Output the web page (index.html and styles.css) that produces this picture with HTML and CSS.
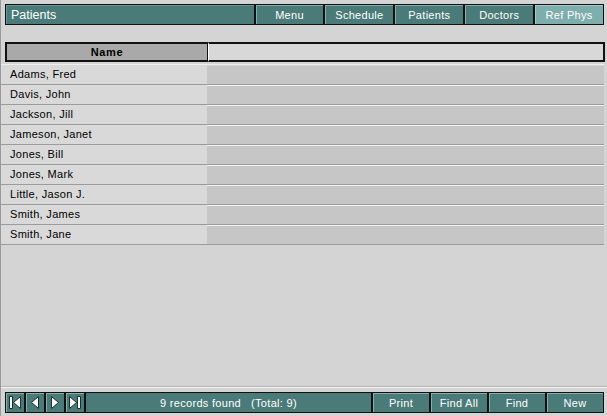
FILE: index.html
```html
<!DOCTYPE html>
<html lang="en">
<head>
    <meta charset="UTF-8">
    <title>Patients</title>
    <link rel="stylesheet" href="styles.css">
</head>
<body>
    <div class="window">

        <!-- Top bar -->
        <div class="topbar">
            <div class="panel title">Patients</div>
            <div class="btn">Menu</div>
            <div class="btn">Schedule</div>
            <div class="btn">Patients</div>
            <div class="btn">Doctors</div>
            <div class="btn active">Ref Phys</div>
        </div>

        <!-- Column header -->
        <div class="colhead">
            <div class="head-name">Name</div>
            <div class="head-rest"></div>
        </div>

        <!-- Records -->
        <div class="list">
            <div class="row"><div class="cell-name">Adams, Fred</div><div class="cell-rest"></div></div>
            <div class="row"><div class="cell-name">Davis, John</div><div class="cell-rest"></div></div>
            <div class="row"><div class="cell-name">Jackson, Jill</div><div class="cell-rest"></div></div>
            <div class="row"><div class="cell-name">Jameson, Janet</div><div class="cell-rest"></div></div>
            <div class="row"><div class="cell-name">Jones, Bill</div><div class="cell-rest"></div></div>
            <div class="row"><div class="cell-name">Jones, Mark</div><div class="cell-rest"></div></div>
            <div class="row"><div class="cell-name">Little, Jason J.</div><div class="cell-rest"></div></div>
            <div class="row"><div class="cell-name">Smith, James</div><div class="cell-rest"></div></div>
            <div class="row"><div class="cell-name">Smith, Jane</div><div class="cell-rest"></div></div>
        </div>

        <div class="spacer"></div>

        <!-- Bottom bar -->
        <div class="footer">
            <div class="bottombar">
                <div class="nav">
                    <svg width="14" height="15" viewBox="0 0 14 15"><path d="M1.5 1.5h3v12h-3z M12.5 1.5v12L5.5 7.5z" fill="#fff" stroke="#16302e" stroke-width="1"/></svg>
                </div>
                <div class="nav">
                    <svg width="14" height="15" viewBox="0 0 14 15"><path d="M10.5 1.5v12L3.5 7.5z" fill="#fff" stroke="#16302e" stroke-width="1"/></svg>
                </div>
                <div class="nav">
                    <svg width="14" height="15" viewBox="0 0 14 15"><path d="M3.5 1.5v12l7-6z" fill="#fff" stroke="#16302e" stroke-width="1"/></svg>
                </div>
                <div class="nav">
                    <svg width="14" height="15" viewBox="0 0 14 15"><path d="M1.5 1.5v12l7-6z M9.5 1.5h3v12h-3z" fill="#fff" stroke="#16302e" stroke-width="1"/></svg>
                </div>
                <div class="panel status">9 records found &nbsp; (Total: 9)</div>
                <div class="btn small">Print</div>
                <div class="btn small">Find All</div>
                <div class="btn small">Find</div>
                <div class="btn small">New</div>
            </div>
        </div>

    </div>
</body>
</html>
```

FILE: styles.css
```css
/* General */
body {
    margin: 0;
    padding: 0;
    background: #d4d4d4;
    font-family: "Liberation Sans", Arial, sans-serif;
    font-size: 11px;
    color: #000;
}

.window {
    height: 416px;
    display: flex;
    flex-direction: column;
    border-left: 1px solid #9a9a9a;
    box-sizing: border-box;
}

/* Top bar */
.topbar {
    display: flex;
    height: 21px;
    margin: 4px 3px 0 4px;
}

.panel,
.btn {
    background: #4a7b78;
    color: #fff;
    border: 1px solid #111;
    box-sizing: border-box;
    display: flex;
    align-items: center;
}

.title {
    width: 250px;
    padding-left: 5px;
    font-size: 12.5px;
    box-shadow: inset 1px 1px 0 #6a9794;
}

.btn {
    width: 70px;
    justify-content: center;
    letter-spacing: 0.3px;
    box-shadow: inset 1px 1px 0 #86aeab;
}

.btn.active {
    background: #7eaeab;
    box-shadow: inset 1px 1px 0 #a8cac7;
}

/* Column header */
.colhead {
    display: flex;
    height: 20px;
    margin: 17px 2px 0 4px;
}

.head-name {
    width: 203px;
    background: #a9a9a9;
    border: 2px solid #111;
    border-right-width: 1px;
    box-sizing: border-box;
    font-weight: bold;
    text-align: center;
    line-height: 16px;
    letter-spacing: 0.6px;
}

.head-rest {
    flex: 1;
    background: #d8d8d8;
    border: 2px solid #111;
    border-left: 1px solid #fff;
    box-sizing: border-box;
}

/* Rows */
.list {
    margin-top: 2px;
    margin-right: 3px;
    border-top: 1px solid #eeeeee;
}

.row {
    display: flex;
    height: 20px;
    border-bottom: 1px solid #9c9c9c;
    box-shadow: inset 0 1px 0 #f2f2f2;
    box-sizing: border-box;
}

.row:first-child {
    box-shadow: none;
}

.cell-name {
    width: 206px;
    padding-left: 9px;
    box-sizing: border-box;
    background: #d9d9d9;
    line-height: 19px;
    letter-spacing: 0.3px;
}

.cell-rest {
    flex: 1;
    background: #c6c6c6;
    margin-top: 1px;
}

.spacer {
    flex: 1;
}

/* Bottom bar */
.footer {
    border-top: 1px solid #f4f4f4;
    box-shadow: 0 -1px 0 #b4b4b4;
    padding: 4px 3px 3px 4px;
}

.bottombar {
    display: flex;
    height: 21px;
}

.nav {
    width: 20px;
    background: #4a7b78;
    border: 1px solid #111;
    box-sizing: border-box;
    box-shadow: inset 1px 1px 0 #86aeab;
    display: flex;
    align-items: center;
    justify-content: center;
}

.status {
    width: 287px;
    justify-content: center;
    letter-spacing: 0.3px;
}

.btn.small {
    width: 58px;
}
```
